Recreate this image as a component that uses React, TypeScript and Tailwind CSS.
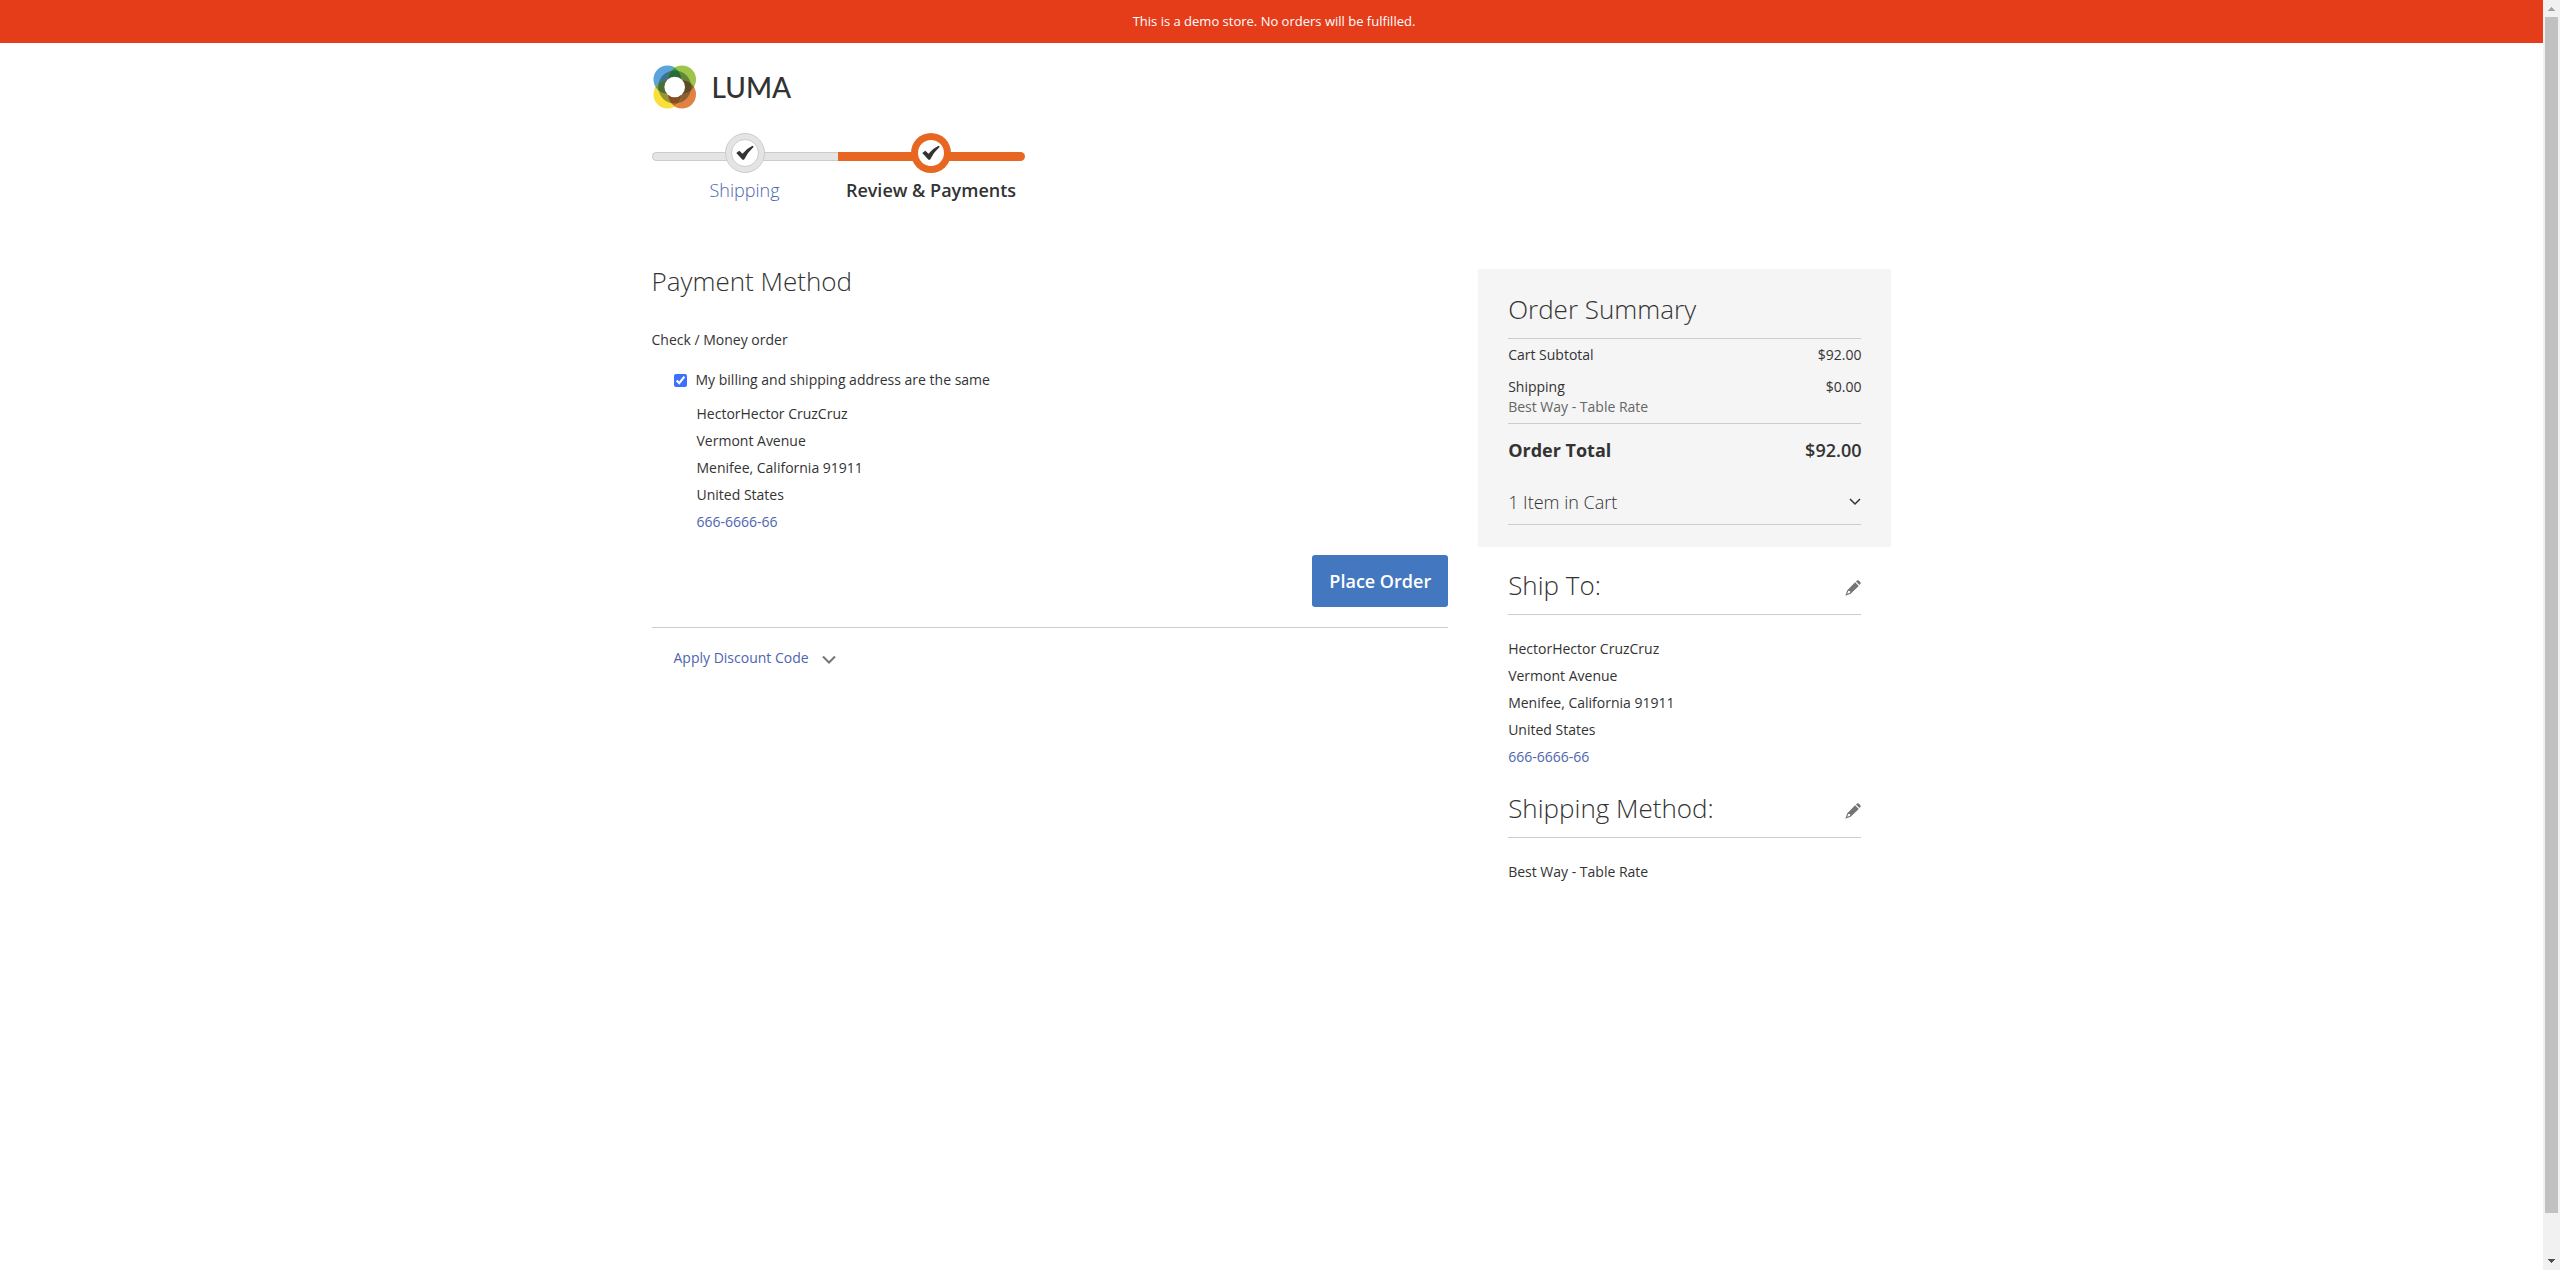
import React from 'react';

const address = ['HectorHector CruzCruz', 'Vermont Avenue', 'Menifee, California 91911', 'United States'];

function Logo() {
  return (
    <a href="#" aria-label="LUMA home" className="flex w-max items-center gap-4 text-[#333]">
      <svg width="44" height="44" viewBox="0 0 44 44" aria-hidden="true">
        <circle cx="15.5" cy="14.5" r="14" fill="#5aa5de" />
        <circle cx="30" cy="14.5" r="14" fill="#9cc54a" />
        <circle cx="30" cy="29.5" r="14" fill="#e18142" />
        <circle cx="15.5" cy="29.5" r="14" fill="#f8df3a" />
        <path d="M22.700 2.700A14 14 0 0 1 22.700 26.300A14 14 0 0 1 22.700 2.700Z" fill="#2f9a4c" />
        <path d="M22.700 17.700A14 14 0 0 1 22.700 41.300A14 14 0 0 1 22.700 17.700Z" fill="#d0682a" />
        <path d="M3.500 22A14 14 0 0 1 27.500 22A14 14 0 0 1 3.500 22Z" fill="#6aa04a" />
        <path d="M18.200 22A14 14 0 0 1 42 22A14 14 0 0 1 18.200 22Z" fill="#8a6428" />
        <circle cx="22.700" cy="22" r="16.500" fill="#1d2b20" fillOpacity="0.42" />
        <circle cx="22.700" cy="22" r="10.300" fill="#fff" />
      </svg>
      <span className="font-[Lato] text-[28px] leading-none font-medium">LUMA</span>
    </a>
  );
}

function Tick() {
  return (
    <svg width="18" height="16" viewBox="0 0 18 16" aria-hidden="true">
      <path d="M0.300 8L3.300 5.800L6.500 8.700Q10.500 3.500 16.500 0.700L17.700 1.800Q11.500 7.500 8 14.800H6.500Z" fill="#333" />
    </svg>
  );
}

function Step({ active, children }: { active?: boolean; children: React.ReactNode }) {
  return (
    <li className={active ? 'relative flex w-[187px] flex-col items-center' : 'relative flex w-[186px] flex-col items-center'}>
      <span
        className={
          active
            ? 'absolute inset-x-0 top-[19px] h-[9px] rounded-r-md bg-[#e76722]'
            : 'absolute inset-x-0 top-[19px] h-[9px] rounded-l-md border border-r-0 border-[#ccc] bg-[#e4e4e4]'
        }
      />
      <span
        className={
          active
            ? 'relative flex size-10 items-center justify-center rounded-full bg-[#e76722]'
            : 'relative flex size-10 items-center justify-center rounded-full border border-[#ccc] bg-[#e4e4e4]'
        }
      >
        <span
          className={
            active
              ? 'flex size-[26px] items-center justify-center rounded-full bg-white'
              : 'flex size-7 items-center justify-center rounded-full border border-[#ccc] bg-white'
          }
        >
          <Tick />
        </span>
      </span>
      {children}
    </li>
  );
}

function Address() {
  return (
    <address className="text-sm leading-[27px] not-italic">
      {address.map((line) => (
        <div key={line}>{line}</div>
      ))}
      <a href="tel:666666666" className="text-[#4d64b0]">666-6666-66</a>
    </address>
  );
}

function Pencil() {
  return (
    <svg width="16" height="16" viewBox="0 0 16 16" fill="#757575" aria-hidden="true">
      <path d="M10.900 1.500L12.200 0.500Q13 0 13.800 0.600L15.400 2.200Q16 3 15.500 3.800L14.500 5.100Z" />
      <path fillRule="evenodd" d="M10.100 2.200L13.800 5.900L5.600 13.700L0.300 15.700L2.300 10.300ZM3.300 10.900L2.200 13.800L5 12.700L5.200 11Z" />
    </svg>
  );
}

function InfoBlock({ title, children }: { title: string; children: React.ReactNode }) {
  return (
    <section>
      <div className="mb-5 flex items-center justify-between border-b border-[#ccc] pt-1 pb-[11px]">
        <h2 className="text-[26px] leading-9 font-light">{title}</h2>
        <button type="button" aria-label={'Edit ' + title} className="mt-1.5">
          <Pencil />
        </button>
      </div>
      {children}
    </section>
  );
}

export default function App() {
  return (
    <div className="flex min-h-screen bg-white font-['Open_Sans',sans-serif] text-sm text-[#333]">
      <div className="min-w-0 flex-1">
        <p className="bg-[#e53c1a] py-3 pr-5 pl-[25px] text-center text-[13px] leading-[19px] text-white">
          This is a demo store. No orders will be fulfilled.
        </p>
        <div className="mx-auto max-w-[1280px] px-5">
          <header className="pt-[22px] pb-6">
            <Logo />
          </header>
          <ol className="flex">
            <Step>
              <a href="#" className="mt-1 text-lg leading-[26px] font-light text-[#4d64b0]">Shipping</a>
            </Step>
            <Step active>
              <span className="mt-1 text-lg leading-[26px] font-semibold">Review &amp; Payments</span>
            </Step>
          </ol>
          <div className="mt-[66px] flex items-start">
            <main className="w-2/3 pr-[30px]">
              <h1 className="text-[26px] leading-6 font-light">Payment Method</h1>
              <h2 className="mt-[37px] leading-5">Check / Money order</h2>
              <div className="mt-5 pl-[22px]">
                <label className="flex items-center gap-[9px] leading-5">
                  <input type="checkbox" defaultChecked className="size-[13px] accent-[#3b71fe]" />
                  My billing and shipping address are the same
                </label>
                <div className="mt-2.5 pl-[23px]">
                  <Address />
                </div>
              </div>
              <div className="flex justify-end border-b border-[#ccc] pt-5 pb-5">
                <button type="button" className="rounded-[3px] bg-[#4377c0] px-[17px] py-3.5 text-lg leading-6 font-semibold text-white">
                  Place Order
                </button>
              </div>
              <button type="button" className="mt-5 ml-[22px] flex items-center gap-[13px] leading-5 text-[#4d64b0]">
                Apply Discount Code
                <svg width="14" height="9" viewBox="0 0 14 9" fill="none" stroke="#757575" strokeWidth="2" className="mt-0.5" aria-hidden="true">
                  <path d="M1 1.500L7 7.500L13 1.500" />
                </svg>
              </button>
            </main>
            <aside className="w-1/3">
              <section className="bg-[#f5f5f5] px-[30px] pt-[22px] pb-[22px]">
                <h2 className="pb-[11px] text-[26px] leading-9 font-light">Order Summary</h2>
                <table className="w-full leading-5">
                  <tbody>
                    <tr className="border-t border-[#ccc]">
                      <th scope="row" className="py-1.5 text-left font-normal">Cart Subtotal</th>
                      <td className="py-1.5 text-right">$92.00</td>
                    </tr>
                    <tr>
                      <th scope="row" className="py-1.5 text-left font-normal">
                        Shipping
                        <span className="block text-[#666]">Best Way - Table Rate</span>
                      </th>
                      <td className="py-1.5 text-right align-top">$0.00</td>
                    </tr>
                    <tr className="border-t border-[#ccc] text-lg leading-6 font-semibold">
                      <th scope="row" className="py-3.5 text-left">Order Total</th>
                      <td className="py-3.5 text-right">$92.00</td>
                    </tr>
                  </tbody>
                </table>
                <button type="button" className="flex w-full items-center justify-between border-b border-[#ccc] pt-[13px] pb-[9px] text-lg leading-[26px] font-light">
                  1 Item in Cart
                  <svg width="12" height="8" viewBox="0 0 12 8" fill="none" stroke="#333" strokeWidth="1.500" aria-hidden="true">
                    <path d="M1 1L6 6L11 1" />
                  </svg>
                </button>
              </section>
              <div className="flex flex-col gap-4 px-[30px] pt-4">
                <InfoBlock title="Ship To:">
                  <Address />
                </InfoBlock>
                <InfoBlock title="Shipping Method:">
                  <p className="leading-[27px]">Best Way - Table Rate</p>
                </InfoBlock>
              </div>
            </aside>
          </div>
        </div>
      </div>
      <div className="flex w-[17px] shrink-0 flex-col items-center bg-[#f1f1f1]" aria-hidden="true">
        <svg width="17" height="17" viewBox="0 0 17 17" shapeRendering="crispEdges">
          <path d="M5 11H12L8.500 7Z" fill="#a3a3a3" />
        </svg>
        <div className="w-[13px] flex-1 bg-[#c1c1c1]" />
        <div className="h-10" />
        <svg width="17" height="17" viewBox="0 0 17 17" shapeRendering="crispEdges">
          <path d="M5 6H12L8.500 10Z" fill="#505050" />
        </svg>
      </div>
    </div>
  );
}
